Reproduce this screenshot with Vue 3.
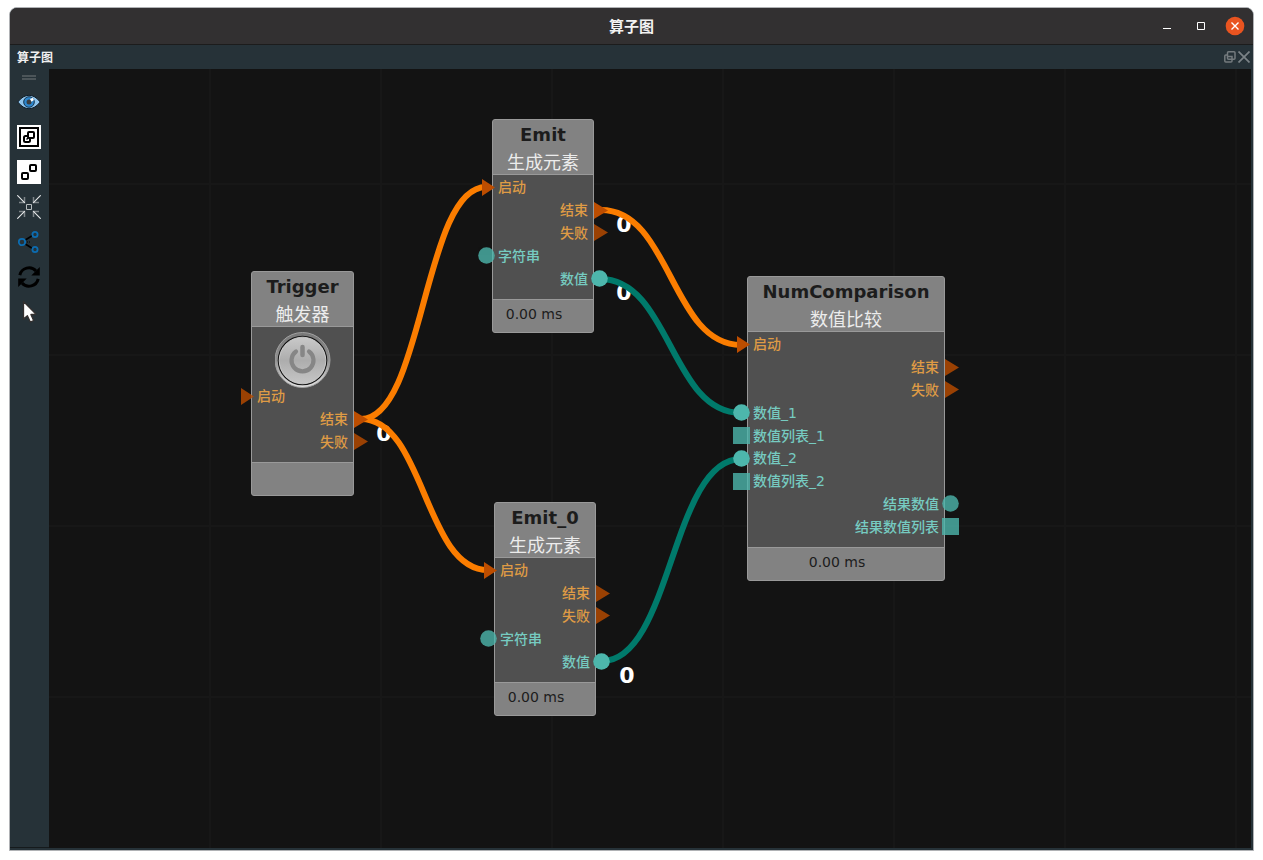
<script setup>
const flow = 'flow'
const num = 'num'

const nodes = [
  {
    id: 'Trigger', title: '触发器', x: 202, y: 202, w: 103, h: 225, time: '', power: true,
    rows: [
      { label: '启动', side: 'in', kind: flow, shape: 'tri', on: false },
      { label: '结束', side: 'out', kind: flow, shape: 'tri', on: true },
      { label: '失败', side: 'out', kind: flow, shape: 'tri', on: false }
    ]
  },
  {
    id: 'Emit', title: '生成元素', x: 443, y: 50, w: 102, h: 214, time: '0.00 ms',
    rows: [
      { label: '启动', side: 'in', kind: flow, shape: 'tri', on: true },
      { label: '结束', side: 'out', kind: flow, shape: 'tri', on: true },
      { label: '失败', side: 'out', kind: flow, shape: 'tri', on: false },
      { label: '字符串', side: 'in', kind: num, shape: 'dot', on: false },
      { label: '数值', side: 'out', kind: num, shape: 'dot', on: true }
    ]
  },
  {
    id: 'Emit_0', title: '生成元素', x: 445, y: 433, w: 102, h: 214, time: '0.00 ms',
    rows: [
      { label: '启动', side: 'in', kind: flow, shape: 'tri', on: true },
      { label: '结束', side: 'out', kind: flow, shape: 'tri', on: false },
      { label: '失败', side: 'out', kind: flow, shape: 'tri', on: false },
      { label: '字符串', side: 'in', kind: num, shape: 'dot', on: false },
      { label: '数值', side: 'out', kind: num, shape: 'dot', on: true }
    ]
  },
  {
    id: 'NumComparison', title: '数值比较', x: 698, y: 207, w: 198, h: 305, time: '0.00 ms',
    rows: [
      { label: '启动', side: 'in', kind: flow, shape: 'tri', on: true },
      { label: '结束', side: 'out', kind: flow, shape: 'tri', on: false },
      { label: '失败', side: 'out', kind: flow, shape: 'tri', on: false },
      { label: '数值_1', side: 'in', kind: num, shape: 'dot', on: true },
      { label: '数值列表_1', side: 'in', kind: num, shape: 'box', on: false },
      { label: '数值_2', side: 'in', kind: num, shape: 'dot', on: true },
      { label: '数值列表_2', side: 'in', kind: num, shape: 'box', on: false },
      { label: '结果数值', side: 'out', kind: num, shape: 'dot', on: false },
      { label: '结果数值列表', side: 'out', kind: num, shape: 'box', on: false }
    ]
  }
]

const wires = [
  { kind: flow, from: [312, 350], to: [437, 118] },
  { kind: flow, from: [312, 350], to: [439, 501] },
  { kind: flow, from: [552, 141], to: [692, 276] },
  { kind: num, from: [551, 210], to: [692, 344] },
  { kind: num, from: [553, 592], to: [692, 390] }
]

const counts = [
  { x: 335, y: 365 },
  { x: 575, y: 156 },
  { x: 575, y: 224 },
  { x: 578, y: 607 }
]

function curve({ from, to }) {
  const mid = (from[0] + to[0]) / 2
  return `M${from[0]} ${from[1]} C${mid} ${from[1]} ${mid} ${to[1]} ${to[0]} ${to[1]}`
}
</script>

<template>
  <main class="desktop">
    <section class="window">
      <header class="titlebar">
        <h1>算子图</h1>
        <div class="win-controls">
          <button aria-label="最小化">
            <svg width="20" height="20" viewBox="0 0 20 20"><path d="M6 12.500h8" stroke="#fff" /></svg>
          </button>
          <button aria-label="最大化">
            <svg width="20" height="20" viewBox="0 0 20 20"><path d="M6.500 6.500h7v7h-7z" fill="none" stroke="#fff" /></svg>
          </button>
          <button aria-label="关闭">
            <svg width="20" height="20" viewBox="0 0 20 20">
              <circle cx="10" cy="10" r="9.300" fill="#e95420" />
              <path d="M6.500 6.500l7 7M13.500 6.500l-7 7" stroke="#fff" stroke-width="1.400" />
            </svg>
          </button>
        </div>
      </header>
      <div class="dockbar">
        <h2>算子图</h2>
        <div class="dock-controls">
          <button aria-label="浮动">
            <svg width="12" height="12" viewBox="0 0 12 12" fill="none" stroke="#747b7e" stroke-width="1.500">
              <rect x="3.500" y=".8" width="7.500" height="7.500" rx="1" />
              <path d="M3.500 4H1.800a1 1 0 0 0-1 1v5a1 1 0 0 0 1 1H7a1 1 0 0 0 1-1V5.500H3.500" />
            </svg>
          </button>
          <button aria-label="关闭面板">
            <svg width="12" height="12" viewBox="0 0 12 12"><path d="M.5 .5l11 11M11.500 .5l-11 11" stroke="#7b8387" stroke-width="1.700" /></svg>
          </button>
        </div>
      </div>

      <div class="work">
        <nav class="tools" aria-label="工具">
          <span class="grip"></span>
          <button aria-label="显示">
            <svg width="24" height="24" viewBox="0 0 24 24">
              <path d="M.8 12Q6 5.300 12 5.300T23.200 12Q18 18.700 12 18.700T.8 12z" fill="#8fc4ec" stroke="#101d28" stroke-width="1" />
              <circle cx="12" cy="12" r="5.300" fill="#2c86cd" stroke="#15344d" />
              <circle cx="12" cy="12" r="2.500" fill="#3b3d3f" />
              <path d="M13 9l2.700-1.200 1.300 2.200-2.500 1.800z" fill="#fff" />
            </svg>
          </button>
          <button aria-label="组合">
            <svg width="24" height="24" viewBox="0 0 24 24" fill="none" stroke="#000">
              <path d="M0 0h24v24H0z" fill="#fff" stroke="none" />
              <path d="M3 3h18v18H3z" stroke-width="2" />
              <rect x="11" y="7" width="6" height="6" rx="1" stroke-width="2" />
              <path d="M10.500 11H8.500A1.500 1.500 0 0 0 7 12.500v3A1.500 1.500 0 0 0 8.500 17h3a1.500 1.500 0 0 0 1.500-1.500V13.500" stroke-width="2" />
              <path d="M11.500 12.500l-2 2" stroke-width="1.500" />
            </svg>
          </button>
          <button aria-label="拆分">
            <svg width="24" height="24" viewBox="0 0 24 24" fill="none" stroke="#000" stroke-width="2">
              <path d="M0 0h24v24H0z" fill="#fff" stroke="none" />
              <rect x="13" y="5" width="6" height="6" rx="1" />
              <rect x="5" y="13" width="6" height="6" rx="1" />
            </svg>
          </button>
          <button aria-label="适应窗口">
            <svg width="24" height="24" viewBox="0 0 24 24" fill="none">
              <path d="M2 7.500h5.500V2M22 7.500h-5.500V2M2 16.500h5.500V22M22 16.500h-5.500V22" stroke="#7e8588" stroke-width="1.500" />
              <path d="M.3 .3l7.500 7.500M23.700 .3l-7.500 7.500M.3 23.700l7.500-7.500M23.700 23.700l-7.500-7.500" stroke="#e8eaeb" stroke-width="1.100" />
              <path d="M9.500 9.500h5v5h-5z" stroke="#b7bcbe" />
            </svg>
          </button>
          <button aria-label="布局">
            <svg width="24" height="24" viewBox="0 0 24 24" fill="none">
              <path d="M7.500 10.500l8-5M7.500 13.500l8 5" stroke="#000" stroke-width="1.600" />
              <path d="M8 12h6" stroke="#000" stroke-dasharray="1 1" />
              <g stroke="#0c6cb0" stroke-width="1.800">
                <circle cx="5" cy="12" r="3.200" />
                <circle cx="18" cy="4.500" r="2.600" />
                <circle cx="18" cy="19.500" r="2.600" />
              </g>
            </svg>
          </button>
          <button aria-label="刷新">
            <svg width="24" height="24" viewBox="0 0 24 24" fill="none" stroke="#000" stroke-width="3">
              <path d="M2.800 10.200A9.400 9.400 0 0 1 19 6M21.200 13.800A9.400 9.400 0 0 1 5 18" />
              <path d="M22.800 2v8.500h-8.500zM1.200 22v-8.500h8.500z" fill="#000" stroke="none" />
            </svg>
          </button>
          <button aria-label="选择">
            <svg width="24" height="24" viewBox="0 0 24 24">
              <path d="M6.500 1.500V19l3.900-3.300 2.900 6.300 3.300-1.500-2.700-6 5-.4z" fill="#fff" stroke="#34302f" stroke-width="1.300" stroke-linejoin="round" />
            </svg>
          </button>
        </nav>

        <div class="canvas">
          <span v-for="(c, i) in counts" :key="i" class="count" :style="{ left: c.x + 'px', top: c.y + 'px' }">0</span>
          <svg class="wires" width="100%" height="100%">
            <path v-for="(w, i) in wires" :key="i" :class="w.kind" :d="curve(w)" />
          </svg>

          <article
            v-for="n in nodes"
            :key="n.id"
            class="node"
            :style="{ left: n.x + 'px', top: n.y + 'px', width: n.w + 'px', height: n.h + 'px' }"
          >
            <header class="node-head">
              <h3>{{ n.id }}</h3>
              <p>{{ n.title }}</p>
            </header>
            <div class="node-body">
              <button v-if="n.power" class="power" aria-label="触发">
                <svg width="56" height="56" viewBox="0 0 56 56" fill="none">
                  <defs>
                    <linearGradient id="rim" x1="0" y1="0" x2="0" y2="1">
                      <stop offset="0" stop-color="#777" />
                      <stop offset=".5" stop-color="#929292" />
                      <stop offset="1" stop-color="#e2e2e2" />
                    </linearGradient>
                    <linearGradient id="face" x1="0" y1="0" x2="0" y2="1">
                      <stop offset="0" stop-color="#c9c9c9" />
                      <stop offset=".5" stop-color="#adadad" />
                      <stop offset="1" stop-color="#c6c6c6" />
                    </linearGradient>
                  </defs>
                  <circle cx="27.500" cy="28" r="27.500" fill="url(#rim)" stroke="#a0a0a0" />
                  <circle cx="27.500" cy="28.500" r="24.800" fill="#151515" />
                  <circle cx="27.500" cy="28.500" r="23.300" fill="url(#face)" stroke="#dedede" stroke-width=".8" />
                  <path d="M21 19.500a11 11 0 1 0 13 0" stroke="#868686" stroke-width="4.200" stroke-linecap="round" />
                  <path d="M27.500 15v8" stroke="#868686" stroke-width="4.500" stroke-linecap="round" />
                </svg>
              </button>
              <div v-for="r in n.rows" :key="r.label" class="row" :class="[r.side, r.kind, { on: r.on }]">
                <svg class="port" width="17" height="17" viewBox="0 0 17 17">
                  <path v-if="r.shape === 'tri'" :d="r.side === 'in' ? 'M4 0L17 8.500L4 17z' : 'M3 0L17 8.500L3 17z'" />
                  <circle v-else-if="r.shape === 'dot'" cx="8.500" cy="8.500" r="8.300" />
                  <rect v-else width="17" height="17" />
                </svg>
                <span>{{ r.label }}</span>
              </div>
            </div>
            <footer class="node-foot">{{ n.time }}</footer>
          </article>
        </div>
      </div>
    </section>
  </main>
</template>

<style>
body {
  margin: 0;
  background: #fff;
}
</style>

<style scoped>
.desktop {
  box-sizing: border-box;
  min-height: 100vh;
  padding: 7px 9px 9px;
  display: flex;
  font-family: "DejaVu Sans", "Noto Sans CJK SC", sans-serif;
}
.window {
  flex: 1;
  min-width: 0;
  display: flex;
  flex-direction: column;
  border: 1px solid #b0b2b5;
  border-radius: 8px 8px 0 0;
  overflow: hidden;
  background: #263238;
}
h1, h2, h3, p {
  margin: 0;
}
button {
  padding: 0;
  border: 0;
  background: none;
  display: block;
}
svg {
  display: block;
}
.titlebar {
  height: 36px;
  display: grid;
  grid-template-columns: 1fr auto 1fr;
  align-items: center;
  background: #323031;
  border-bottom: 1px solid #1c1c1c;
}
.titlebar h1 {
  grid-column: 2;
  padding-top: 2px;
  font-size: 15px;
  line-height: 20px;
  font-weight: 700;
  color: #f2f2f2;
}
.win-controls {
  justify-self: end;
  display: flex;
  gap: 14px;
  padding-right: 8px;
}
.dockbar {
  height: 24px;
  padding: 0 3px 0 7px;
  display: flex;
  align-items: center;
  justify-content: space-between;
}
.dockbar h2 {
  padding-top: 2px;
  font-size: 12px;
  line-height: 18px;
  font-weight: 700;
  color: #f0f0f0;
}
.dock-controls {
  display: flex;
  gap: 2px;
}
.work {
  flex: 1;
  display: flex;
  padding: 0 2px 2px 0;
}
.tools {
  width: 39px;
  display: flex;
  flex-direction: column;
  align-items: flex-start;
  gap: 11px;
  padding: 6px 0 0 7px;
  box-sizing: border-box;
  border-bottom: 1px solid #151a1c;
}
.grip {
  width: 14px;
  height: 1px;
  border-top: 2px solid #4c5559;
  border-bottom: 2px solid #4c5559;
  margin: 0 0 -1px 5px;
}
.canvas {
  position: relative;
  flex: 1;
  overflow: hidden;
  background-color: #131313;
  background-image:
    linear-gradient(90deg, #171717 2px, transparent 2px),
    linear-gradient(#171717 2px, transparent 2px);
  background-size: 171px 171px;
  background-position: 160px 114px;
}
.count {
  position: absolute;
  transform: translate(-50%, -50%);
  font-size: 22px;
  line-height: 26px;
  font-weight: 700;
  color: #fff;
}
.wires {
  position: absolute;
  inset: 0;
}
.wires path {
  fill: none;
  stroke-width: 6px;
}
.wires .flow {
  stroke: #fb7d00;
}
.wires .num {
  stroke: #007a6b;
}
.node {
  position: absolute;
  box-sizing: border-box;
  display: flex;
  flex-direction: column;
  border: 1px solid #999;
  border-radius: 3px;
  background: #828282;
}
.node-head {
  height: 53px;
  padding-top: 1px;
  border-bottom: 1px solid #999;
  text-align: center;
}
.node-head h3 {
  font-size: 18px;
  line-height: 28px;
  font-weight: 700;
  color: #1c1c1c;
}
.node-head p {
  font-size: 18px;
  line-height: 27px;
  color: #ececec;
}
.node-body {
  flex: 1;
  min-height: 0;
  display: flex;
  flex-direction: column;
  padding: 1px 0 9px;
  background: #505050;
}
.power {
  height: 53px;
  margin-top: 4px;
  align-self: center;
}
.row {
  position: relative;
  flex: 1;
  min-height: 0;
  display: flex;
  align-items: center;
  padding: 0 5px;
  font-size: 14px;
  line-height: 20px;
  font-weight: 500;
}
.row.out {
  justify-content: flex-end;
}
.row.flow {
  color: #df9b45;
}
.row.num {
  color: #76cbc1;
}
.port {
  position: absolute;
  left: -15px;
  opacity: 0.8;
}
.out .port {
  left: auto;
  right: -15px;
}
.on .port {
  opacity: 1;
}
.flow .port {
  fill: #bc4d00;
}
.num .port {
  fill: #4db6ac;
}
.node-foot {
  height: 32px;
  padding-right: 18px;
  border-top: 1px solid #999;
  text-align: center;
  font-size: 14px;
  line-height: 28px;
  color: #1c1c1c;
}
</style>
